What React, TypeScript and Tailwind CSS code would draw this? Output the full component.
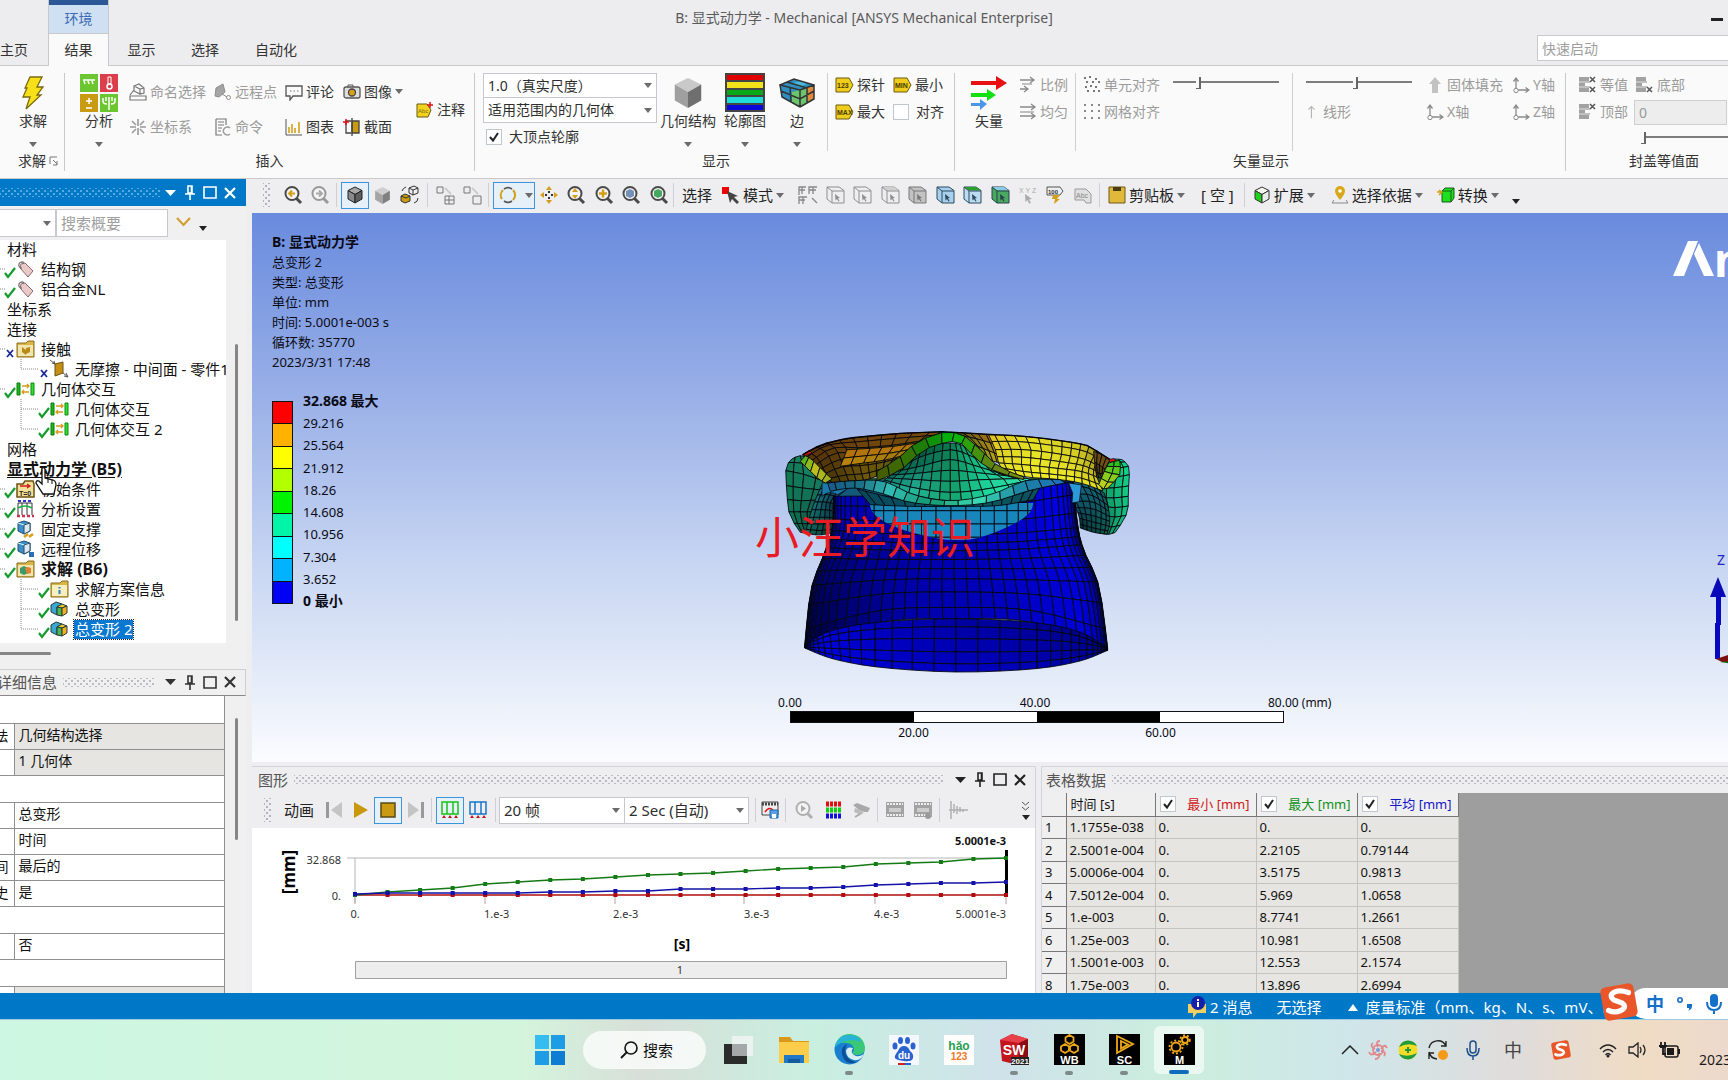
import React from "react";

type P = [number, number];
type RGB = [number, number, number];

/* ---------- shared small pieces ---------- */

function Caret({ className = "text-[#6b6b6b]" }: { className?: string }) {
  return (
    <svg width="8" height="5" viewBox="0 0 8 5" className={"shrink-0 " + className} aria-hidden="true">
      <path d="M0 0h8L4 5z" fill="currentColor" />
    </svg>
  );
}

function Ic({ w = 18, h = 18, vb = "0 0 18 18", children }: { w?: number; h?: number; vb?: string; children: React.ReactNode }) {
  return (
    <svg width={w} height={h} viewBox={vb} fill="none" className="shrink-0" aria-hidden="true">
      {children}
    </svg>
  );
}

function Cube({ top, left, right, line = "#444", w = 18 }: { top: string; left: string; right: string; line?: string; w?: number }) {
  return (
    <Ic w={w} h={w}>
      <path d="M9 1l7 3.500-7 4-7-4z" fill={top} stroke={line} />
      <path d="M2 4.500v8.500l7 4V8.500z" fill={left} stroke={line} />
      <path d="M16 4.500v8.500l-7 4V8.500z" fill={right} stroke={line} />
    </Ic>
  );
}

function Mag({ color = "#4a4a4a", fill = "#f4f4f4", children }: { color?: string; fill?: string; children?: React.ReactNode }) {
  return (
    <Ic w={20} h={20} vb="0 0 20 20">
      <path d="M13 13l5 5" stroke={color} strokeWidth="3" />
      <circle cx="9" cy="8.500" r="6.500" fill={fill} stroke={color} strokeWidth="2" />
      {children}
    </Ic>
  );
}

function Tag({ text }: { text: string }) {
  return (
    <Ic w={19} h={16} vb="0 0 19 16">
      <path d="M1 1h13l4 7-4 7H1z" fill="#f0cc1c" stroke="#6a5a10" />
      <text x="2" y="11" fontSize="7" fontWeight="700" fill="#4a3c00" fontFamily="Liberation Sans, sans-serif">{text}</text>
    </Ic>
  );
}

function SelBox({ fill = "none", line = "#8e8e8e", face = "none" }: { fill?: string; line?: string; face?: string }) {
  return (
    <Ic w={19} h={20} vb="0 0 19 20">
      <path d="M1 2h12l5 3.500V18H6l-5-4z" fill={fill} stroke={line} />
      {face !== "none" && <path d="M1 2h12l5 3.500H6z" fill={face} />}
      <path d="M1 2l5 4h12M6 6v12" stroke={line} />
      <path d="M9 9l5 4-2 .3 1.500 2.700-1 .6-1.500-2.600-1.500 1.400z" fill={line} />
    </Ic>
  );
}

function Axis() {
  return (
    <Ic>
      <path d="M4 14V3M4 14h12M1.500 5.500L4 2l2.500 3.500M13.500 11.500L17 14l-3.500 2.500" stroke="#8a8a8a" strokeWidth="1.300" />
      <circle cx="4" cy="14.500" r="2.200" fill="#f9f9f9" stroke="#8a8a8a" />
    </Ic>
  );
}

function Iso({ v = 0 }: { v?: number }) {
  return (
    <Ic w={19} h={18} vb="0 0 19 18">
      <path d="M1 1h10v4H1zM1 7h6v3H1zM1 12h10v4H1z" fill="#a2a2a2" />
      <path d="M1 6h11M1 11h11" stroke="#888" />
      {v !== 1 && <path d="M12 1l5 5m0-5l-5 5" stroke="#555" strokeWidth="1.500" />}
      {v !== 2 && <path d="M12 11l5 5m0-5l-5 5" stroke="#555" strokeWidth="1.500" />}
    </Ic>
  );
}

function Small({ icon, label, off, caret }: { icon: React.ReactNode; label: string; off?: boolean; caret?: boolean }) {
  return (
    <button type="button" className={"flex h-6 items-center gap-[3px] whitespace-nowrap text-sm leading-5 " + (off ? "text-[#9c9c9c]" : "text-[#333]")}>
      {icon}
      <span>{label}</span>
      {caret && <Caret />}
    </button>
  );
}

function Big({ icon, label, caret = true, className }: { icon: React.ReactNode; label: string; caret?: boolean; className: string }) {
  return (
    <button type="button" className={"flex h-20 shrink-0 flex-col items-center text-sm text-[#333] " + className}>
      <span className="flex h-[39px] items-center justify-center">{icon}</span>
      <span className="whitespace-nowrap leading-[18px]">{label}</span>
      {caret && <span className="mt-3"><Caret /></span>}
    </button>
  );
}

function Group({ label, className, children }: { label: React.ReactNode; className: string; children: React.ReactNode }) {
  return (
    <section className={"my-[7px] flex flex-col border-[#c9c9cc] " + className}>
      <div className="flex h-20">{children}</div>
      <div className="flex h-4 items-center justify-center text-sm leading-4 whitespace-nowrap text-[#333]">{label}</div>
    </section>
  );
}

function Drop({ value, label, className }: { value: string; label: string; className: string }) {
  return (
    <div className={"relative border border-[#c6c8ce] bg-white " + className}>
      <select aria-label={label} className="h-full w-full appearance-none bg-transparent pr-5 pl-1 text-[#2d2d2d] outline-none">
        <option>{value}</option>
      </select>
      <span className="pointer-events-none absolute inset-y-0 right-1 flex items-center"><Caret /></span>
    </div>
  );
}

function Tick({ id, checked, className }: { id: string; checked: boolean; className: string }) {
  return (
    <span className={"relative inline-block shrink-0 " + className}>
      <input id={id} type="checkbox" defaultChecked={checked} className="peer block h-full w-full appearance-none border border-[#c2c6cf] bg-white" />
      <svg viewBox="0 0 14 14" className="pointer-events-none absolute inset-0 hidden h-full w-full p-px peer-checked:block" aria-hidden="true">
        <path d="M3 7l3 3.500L11 3" fill="none" stroke="#222" strokeWidth="2" />
      </svg>
    </span>
  );
}

function Range({ label, value, className }: { label: string; value: number; className: string }) {
  return (
    <input
      type="range"
      aria-label={label}
      defaultValue={value}
      className={"h-4 appearance-none bg-transparent [&::-webkit-slider-runnable-track]:h-0.5 [&::-webkit-slider-runnable-track]:bg-[#7d7d7d] [&::-webkit-slider-thumb]:-mt-1 [&::-webkit-slider-thumb]:h-3 [&::-webkit-slider-thumb]:w-[5px] [&::-webkit-slider-thumb]:appearance-none [&::-webkit-slider-thumb]:border-r-2 [&::-webkit-slider-thumb]:border-b [&::-webkit-slider-thumb]:border-[#666] [&::-webkit-slider-thumb]:bg-[#f9f9f9] " + className}
    />
  );
}

function Dots({ light }: { light?: boolean }) {
  return (
    <div
      className={
        "h-[9px] min-w-0 flex-1 [background-position:0_0,3px_3px] [background-size:6px_6px] " +
        (light
          ? "[background-image:radial-gradient(#5aa9e0_18%,transparent_26%),radial-gradient(#5aa9e0_18%,transparent_26%)]"
          : "[background-image:radial-gradient(#bcbcc0_18%,transparent_26%),radial-gradient(#bcbcc0_18%,transparent_26%)]")
      }
    />
  );
}

function Grip() {
  return <div className="h-[24px] w-[7px] shrink-0 [background-image:radial-gradient(#b4b4b8_20%,transparent_28%),radial-gradient(#b4b4b8_20%,transparent_28%)] [background-position:0_0,3px_3px] [background-size:6px_6px]" />;
}

function PanelButtons() {
  const b = "flex h-5 items-center justify-center";
  return (
    <div className="flex shrink-0 items-center">
      <button type="button" aria-label="菜单" className={b + " w-5"}><Ic w={11} h={6} vb="0 0 11 6"><path d="M0 0h11L5.500 6z" fill="currentColor" /></Ic></button>
      <button type="button" aria-label="固定" className={b + " w-5"}><Ic w={10} h={15} vb="0 0 10 15"><path d="M3 1h4v7H3zM6.500 1v7M0 9h10M5 9v6" stroke="currentColor" strokeWidth="1.600" /></Ic></button>
      <button type="button" aria-label="最大化" className={b + " w-5"}><Ic w={14} h={13} vb="0 0 14 13"><path d="M1 1h12v11H1z" stroke="currentColor" strokeWidth="1.600" /></Ic></button>
      <button type="button" aria-label="关闭" className={b + " w-5"}><Ic w={12} h={12} vb="0 0 12 12"><path d="M1 1l10 10M11 1L1 11" stroke="currentColor" strokeWidth="2.200" /></Ic></button>
    </div>
  );
}

function VSep({ className = "h-6 mx-[3px]" }: { className?: string }) {
  return <div className={"w-px shrink-0 bg-[#cfcfd3] " + className} />;
}

/* ---------- title bar and tabs ---------- */

function TitleBar() {
  const tab = "h-[33px] text-sm text-[#333]";
  return (
    <header className="relative flex h-[66px] shrink-0 items-stretch border-b border-[#c9c9cc] bg-[#ededf0]">
      <nav className="z-10 flex h-[66px] items-end">
        <button type="button" className={tab + " w-[48px] pr-5 text-left"}>主页</button>
        <div className="flex h-[66px] w-[61px] flex-col border-x border-[#c9c9cc]">
          <div className="flex h-[33px] items-center justify-center border-t-[5px] border-[#2b5797] bg-[#cfe0f2] text-sm text-[#3c6cb4]">环境</div>
          <button type="button" className="h-[33px] border-t border-[#c9c9cc] bg-[#fafafa] text-sm text-[#333]">结果</button>
        </div>
        <button type="button" className={tab + " w-[65px]"}>显示</button>
        <button type="button" className={tab + " w-[62px]"}>选择</button>
        <button type="button" className={tab + " w-[80px]"}>自动化</button>
      </nav>
      <h1 className="absolute inset-x-0 top-2 text-center text-sm leading-5 font-normal text-[#5a5a5a]">B: 显式动力学 - Mechanical [ANSYS Mechanical Enterprise]</h1>
      <button type="button" aria-label="最小化" className="absolute top-[9px] right-[5px] flex h-5 w-3 items-center"><span className="h-[3px] w-full bg-[#222]" /></button>
      <input aria-label="快速启动" placeholder="快速启动" className="ml-auto mt-[35px] h-[26px] w-[191px] border border-r-0 border-[#c9c9cc] bg-white px-1 text-sm outline-none placeholder:text-[#a0a0a0]" />
    </header>
  );
}

/* ---------- ribbon ---------- */

function Ribbon() {
  const bar = (y: number, l: number) => <path d={`M1 ${y}h${l}M${l - 3} ${y - 3}l4 3-4 3`} stroke="#8a8a8a" strokeWidth="1.300" />;
  return (
    <div className="flex h-[113px] shrink-0 overflow-hidden border-b border-[#c9c9cc] bg-[#fafafa]">
      <Group className="w-[65px] shrink-0 border-r" label={<span className="flex items-center gap-[3px] pl-[13px]">求解<Ic w={10} h={10} vb="0 0 10 10"><path d="M1 8V1h7M4 4l4 4M8 5v4H4" stroke="#777" /></Ic></span>}>
        <Big className="w-full pl-0.5" label="求解" icon={<Ic w={24} h={34} vb="0 0 22 34"><path d="M8 1h12l-5 10h6l-6 8h4L4 33l4-12H1l4-9H3z" fill="#f7e018" stroke="#7a6a10" strokeWidth="1.300" /></Ic>} />
      </Group>

      <Group className="w-[410px] shrink-0 border-r" label="插入">
        <Big className="ml-[13px] w-[42px]" label="分析" icon={
          <Ic w={38} h={38} vb="0 0 38 38">
            <path d="M0 0h18v18H0zM20 20h18v18H20z" fill="#6cc62f" /><path d="M20 0h18v18H20z" fill="#dc3f4c" /><path d="M0 20h18v18H0z" fill="#c99b12" />
            <path d="M3 6h12M4 7l1 3M8 7l1 3M12 7l1 3M6 27h6M9 24v6M6 34h6M23 24v3q0 3 4 3M35 24v3q0 3-4 3M29 23v13M26 23v4M32 23v4" stroke="#fff" strokeWidth="1.500" /><path d="M28 3h3v7h-3z" stroke="#fff" /><circle cx="29.500" cy="12.500" r="2.500" stroke="#fff" strokeWidth="1.500" />
          </Ic>} />
        <div className="ml-[9px] grid h-[72px] grid-cols-[85px_71px_58px_72px] grid-rows-2 items-center pt-px">
          <Small off label="命名选择" icon={<Ic><path d="M1 13h16v4H1zM5 3l5-2 5 4v5l-4 1-6-3zM5 3l6 3 4-1M11 6v5M1 12l4-5" stroke="#777" strokeWidth="1.200" /></Ic>} />
          <Small off label="远程点" icon={<Ic><path d="M2 5l7-4 2 8-6 5-4-1z" fill="#a5a5a5" stroke="#8d8d8d" /><path d="M8 11l5 3" stroke="#8d8d8d" /><circle cx="14.500" cy="14.500" r="2" stroke="#8d8d8d" /></Ic>} />
          <Small label="评论" icon={<Ic><path d="M1 3h16v10H8l-3 4v-4H1z" stroke="#555" strokeWidth="1.300" /><path d="M5 8h1.500M8.500 8H10M12 8h1.500" stroke="#777" strokeWidth="1.200" /></Ic>} />
          <Small label="图像" caret icon={<Ic><rect x="1" y="4" width="16" height="11" rx="2" fill="#ddd" stroke="#555" strokeWidth="1.300" /><path d="M5 4V2h5v2" stroke="#555" /><circle cx="9" cy="9.500" r="3.500" fill="#d8a018" stroke="#444" strokeWidth="1.300" /></Ic>} />
          <Small off label="坐标系" icon={<Ic><path d="M9 1v7M9 10v7M1 9h6M11 9h6M3 3l4 4M15 3l-4 4M3 15l4-4M15 15l-4-4" stroke="#9a9a9a" strokeWidth="1.600" /></Ic>} />
          <Small off label="命令" icon={<Ic><path d="M2 1h10v6M2 1v16h6M4 4h6M4 7h6M4 10h4M4 13h3" stroke="#777" strokeWidth="1.200" /><path d="M16 10a4 4 0 1 0 0 6" stroke="#9d9d9d" strokeWidth="1.600" /></Ic>} />
          <Small label="图表" icon={<Ic><path d="M1 1v16h16" stroke="#555" /><path d="M4 15V9M7 15V6M10 15v-5M14 15V4" stroke="#d2a018" strokeWidth="1.600" /></Ic>} />
          <Small label="截面" icon={<Ic><path d="M9 3h7v12H9z" fill="#c99b12" stroke="#444" strokeWidth="1.300" /><path d="M8 3H3v12h5M9 0v18" stroke="#444" strokeWidth="1.300" /><path d="M3 1v6M0 4h6" stroke="#e01010" strokeWidth="1.500" /></Ic>} />
        </div>
        <div className="flex items-center pb-1.5 pl-px">
          <Small label="注释" icon={<Ic><path d="M1 3h10l4 6-3 7H1z" fill="#f2d21e" stroke="#665c10" /><text x="2" y="12" fontSize="6" fill="#7a6a10" fontFamily="Liberation Sans, sans-serif">Abc</text><path d="M14 1v6M11 4h6" stroke="#e01010" strokeWidth="1.500" /></Ic>} />
        </div>
      </Group>

      <Group className="w-[480px] shrink-0 border-r" label={<span className="w-full pl-[227px]">显示</span>}>
        <div className="ml-2 w-[174px] text-sm">
          <Drop className="h-[25px] w-full" label="变形比例" value="1.0（真实尺度）" />
          <Drop className="h-[25px] w-full border-t-0" label="范围" value="适用范围内的几何体" />
          <label htmlFor="vertex" className="mt-1 ml-[3px] flex items-center gap-[7px] leading-5 text-[#333]"><Tick id="vertex" checked className="size-4" />大顶点轮廓</label>
        </div>
        <Big className="ml-0.5 w-[58px]" label="几何结构" icon={<Cube w={34} top="#c9c9c9" left="#9f9f9f" right="#6f6f6f" line="none" />} />
        <Big className="w-14" label="轮廓图" icon={<Ic w={40} h={39} vb="0 0 40 39"><path d="M0 0h40v39H0z" fill="#444" /><path d="M2 2h36v5H2z" fill="#e00000" /><path d="M2 9h36v6H2z" fill="#f2e21a" /><path d="M2 17h36v5H2z" fill="#08a818" /><path d="M2 24h36v6H2z" fill="#1fdcd8" /><path d="M2 32h36v5H2z" fill="#0808d8" /></Ic>} />
        <Big className="w-[48px]" label="边" icon={<Ic w={36} h={30} vb="0 0 36 30"><path d="M1 7l14-6 20 6v14l-14 8L3 19z" fill="#2f8fc0" /><path d="M13 14l8-2 14-5v14l-14 8-8-5z" fill="#6cc46c" /><path d="M28 10l7-3v13l-7 4z" fill="#e08a40" /><path d="M14 5l8-2 6 3-8 3z" fill="#4ab8d8" /><path d="M1 7l14-6 20 6-14 5zM1 7l2 12 18 10M21 12v17M35 7v14l-14 8M8 4l20 6v14M11 9l1 15M2 13l19 8 14-8" stroke="#333" strokeWidth="1.500" /></Ic>} />
        <VSep className="ml-[6px] h-[78px]" />
        <div className="ml-[7px] grid h-[51px] grid-cols-[58px_60px] gap-y-[3px]">
          <Small label="探针" icon={<Tag text="123" />} />
          <Small label="最小" icon={<Tag text="MIN" />} />
          <Small label="最大" icon={<Tag text="MAX" />} />
          <label htmlFor="snap" className="flex items-center gap-[7px] text-sm text-[#333]"><Tick id="snap" checked={false} className="size-4" />对齐</label>
        </div>
      </Group>

      <Group className="w-[611px] shrink-0 border-r" label={<span className="w-full pl-[278px]">矢量显示</span>}>
        <Big className="ml-[11px] w-[46px]" caret={false} label="矢量" icon={<Ic w={36} h={34} vb="0 0 36 34"><path d="M0 5h25V0l11 7-11 7V9H0z" fill="#e81010" /><path d="M0 17h16v-4l9 6-9 6v-4H0z" fill="#12e012" /><path d="M0 27h9v-4l7 5-7 6v-4H0z" fill="#4a96e8" /></Ic>} />
        <div className="ml-[7px] flex flex-col gap-[3px]">
          <Small off label="比例" icon={<Ic>{bar(4, 14)}{bar(13, 8)}<path d="M3 8h10" stroke="#8a8a8a" /></Ic>} />
          <Small off label="均匀" icon={<Ic>{bar(4, 15)}{bar(13, 15)}<path d="M1 9h14" stroke="#aaa" strokeWidth="1.500" /></Ic>} />
        </div>
        <VSep className="ml-[7px] h-[78px]" />
        <div className="ml-[7px] flex flex-col gap-[3px]">
          <Small off label="单元对齐" icon={<Ic><path d="M1 2h2M6 1h2M12 3h2M3 6h2M9 6h2M15 6h2M2 11h2M7 10h2M12 11h2M4 15h2M10 15h2M15 15h2" stroke="#777" strokeWidth="2" /></Ic>} />
          <Small off label="网格对齐" icon={<Ic><path d="M1 2h2M8 2h2M15 2h2M1 8h2M8 8h2M15 8h2M1 15h2M8 15h2M15 15h2" stroke="#888" strokeWidth="2" /></Ic>} />
        </div>
        <Range label="数量" value={23} className="mt-px ml-[13px] w-[106px]" />
        <VSep className="ml-[13px] h-[78px]" />
        <div className="ml-[13px] flex w-[106px] flex-col gap-[10px] pt-px">
          <Range label="长度" value={47} className="w-full" />
          <Small off label="线形" icon={<Ic w={14}><path d="M7 17V2M3 6l4-4 4 4" stroke="#b5b5b5" strokeWidth="1.500" /></Ic>} />
        </div>
        <div className="ml-[14px] grid h-[51px] grid-cols-[86px_50px] gap-y-[3px]">
          <Small off label="固体填充" icon={<Ic><path d="M6 17V8H3l6-7 6 7h-3v9z" fill="#c2c2c2" /></Ic>} />
          <Small off label="Y轴" icon={<Axis />} />
          <Small off label="X轴" icon={<Axis />} />
          <Small off label="Z轴" icon={<Axis />} />
        </div>
      </Group>

      <Group className="min-w-0 flex-1" label={<span className="w-full pl-[63px]">封盖等值面</span>}>
        <div className="grid h-[51px] w-full grid-cols-[57px_1fr] gap-y-[3px] pl-3">
          <Small off label="等值" icon={<Iso />} />
          <Small off label="底部" icon={<Iso v={1} />} />
          <Small off label="顶部" icon={<Iso v={2} />} />
          <div className="flex min-w-0 flex-col">
            <input aria-label="等值面值" defaultValue="0" className="-ml-px h-[25px] w-full shrink-0 border border-[#cfcfcf] bg-[#ededed] px-1 text-sm text-[#999]" />
            <Range label="等值面" value={0} className="mt-1 ml-1.5 w-full" />
          </div>
        </div>
      </Group>
    </div>
  );
}

/* ---------- left side panels ---------- */

const checkPath = (x: number) => `M${x} 14l3 4 7-9`;

type IconKind = "tag" | "contact" | "plane" | "inter" | "init" | "settings" | "fixed" | "remote" | "solution" | "info" | "result";

function TreeGlyph({ kind }: { kind: IconKind }) {
  const folder = <path d="M1 3h9l2-2h6v16H1z" fill="#d9b54a" stroke="#8a6d1d" />;
  switch (kind) {
    case "tag":
      return <g><path d="M5 4l4-1 8 8-5 6-8-9z" fill="#ecc9c9" stroke="#8a6a6a" /><path d="M6 8a3 3 0 1 1 2-5" stroke="#777" strokeWidth="1.300" /></g>;
    case "contact":
      return <g>{folder}<path d="M2 5h15v11H2z" fill="#f2e6b0" /><path d="M6 7l4 3v5l-4-3zM10 8l4-1v5l-4 2z" fill="#b98a18" /></g>;
    case "plane":
      return <g><path d="M5 4l8-2v11l-8 3z" fill="#c58f16" stroke="#6d5210" /><path d="M0 0l5 4M13 13l5 4M2 3l3 1-1-3M16 13l2 4-4-1" stroke="#555" /></g>;
    case "inter":
      return <g><path d="M1 3h3v12H1z" fill="#18b818" stroke="#0a7a0a" /><path d="M15 3h3v12h-3z" fill="#30e030" stroke="#0a8a0a" /><path d="M6 6h7M11 4l2 2-2 2M13 12H6M8 10l-2 2 2 2" stroke="#d89a20" strokeWidth="1.300" /></g>;
    case "init":
      return <g><path d="M1 4h6l2-3h8l1 3v13H1z" fill="#f2df98" stroke="#6d5210" strokeWidth="1.500" /><path d="M4 6h9M11 4l3 2-3 2" stroke="#d02020" strokeWidth="1.300" /><text x="3" y="16" fontSize="7" fontWeight="700" fill="#222" fontFamily="Liberation Sans, sans-serif">T=0</text></g>;
    case "settings":
      return <g><path d="M2 1h14" stroke="#3030d0" strokeWidth="2" strokeDasharray="3 2" /><path d="M2 3v12M6 3v12M11 3v12M16 3v12M2 3h14" stroke="#333" /><path d="M2 8q7-4 14 0" stroke="#20b040" strokeWidth="1.600" /><path d="M1 16h17" stroke="#d03050" strokeWidth="2.500" strokeDasharray="3 2" /></g>;
    case "fixed":
    case "remote":
      return <g><path d="M2 3l6-2 6 2v8l-6 3-6-3z" fill="#3d8fc8" stroke="#234f70" /><path d="M2 3l6 2 6-2" stroke="#dff" /><path d="M8 5l6-2v8l-6 3z" fill="#dfe9ee" stroke="#234f70" />{kind === "fixed" ? <path d="M8 17l4-3M13 17l4-3" stroke="#d8a018" strokeWidth="2.500" /> : <path d="M13 12h5v5h-5z" fill="#2a70b0" />}</g>;
    case "solution":
      return <g>{folder}<path d="M2 5h15v11H2z" fill="#f2e6b0" /><path d="M4 8l4-2 4 2v5l-4 2-4-2z" fill="#3a9a68" /><path d="M9 8l3-1 3 1v5l-4 1z" fill="#e08030" /></g>;
    case "info":
      return <g>{folder}<path d="M2 5h15v11H2z" fill="#f7efc0" /><path d="M9.500 7v1.500M9.500 10v4" stroke="#3080c0" strokeWidth="2" /></g>;
    default:
      return (
        <g strokeLinejoin="round">
          <path d="M1 5l5-3 6 2-5 3v8l-6-3z" fill="#38a8d0" stroke="#2a3a3a" />
          <path d="M7 7l5-3 5 2-5 2z" fill="#e8d030" stroke="#2a3a3a" />
          <path d="M7 7l5 1v8l-5-1z" fill="#48b850" stroke="#2a3a3a" />
          <path d="M12 8l5-2v7l-5 3z" fill="#f0b020" stroke="#2a3a3a" />
        </g>
      );
  }
}

type Row = { t: string; l: 0 | 1 | 2; k?: IconKind; x?: boolean; last?: boolean; bold?: boolean; under?: boolean; sel?: boolean };
const ROWS: Row[] = [
  { t: "材料", l: 0 },
  { t: "结构钢", l: 1, k: "tag" },
  { t: "铝合金NL", l: 1, k: "tag" },
  { t: "坐标系", l: 0 },
  { t: "连接", l: 0 },
  { t: "接触", l: 1, k: "contact", x: true },
  { t: "无摩擦 - 中间面 - 零件1", l: 2, k: "plane", x: true, last: true },
  { t: "几何体交互", l: 1, k: "inter" },
  { t: "几何体交互", l: 2, k: "inter" },
  { t: "几何体交互 2", l: 2, k: "inter", last: true },
  { t: "网格", l: 0 },
  { t: "显式动力学 (B5)", l: 0, bold: true, under: true },
  { t: "初始条件", l: 1, k: "init" },
  { t: "分析设置", l: 1, k: "settings" },
  { t: "固定支撑", l: 1, k: "fixed" },
  { t: "远程位移", l: 1, k: "remote" },
  { t: "求解 (B6)", l: 1, k: "solution", bold: true },
  { t: "求解方案信息", l: 2, k: "info" },
  { t: "总变形", l: 2, k: "result" },
  { t: "总变形 2", l: 2, k: "result", last: true, sel: true },
];

function TreeRow({ r }: { r: Row }) {
  const w = r.l === 2 ? 74 : 40;
  const dx = r.l === 2 ? 34 : 0;
  return (
    <li className="flex h-5 items-center whitespace-nowrap">
      {r.l === 0 ? (
        <span className="w-[6px] shrink-0" />
      ) : (
        <svg width={w} height="20" viewBox={`0 0 ${w} 20`} fill="none" className="shrink-0" aria-hidden="true">
          {r.l === 2 && <path d={r.last ? "M21 0v10h18" : "M21 0v20M21 10h18"} stroke="#888" strokeDasharray="1 1" />}
          {r.l === 1 && <path d="M0 10h5" stroke="#888" strokeDasharray="1 1" />}
          <g transform={`translate(${16 + dx} 1)`}><TreeGlyph kind={r.k as IconKind} /></g>
          {r.x ? <path d={`M${7 + dx} 11l6 7m0-7l-6 7`} stroke="#1a2a9a" strokeWidth="1.800" /> : <path d={checkPath(5 + dx)} stroke="#159a2c" strokeWidth="2.200" />}
        </svg>
      )}
      <span className={"px-px leading-[19px] " + (r.bold ? "text-base font-bold " : "text-[15px] ") + (r.under ? "underline underline-offset-2 " : "") + (r.sel ? "bg-[#0a78d0] text-white outline-1 outline-dotted outline-[#223]" : "text-[#111]")}>{r.t}</span>
    </li>
  );
}

const DETAILS: { a?: string; b?: string; group?: boolean; grey?: boolean }[] = [
  { group: true },
  { a: "法", b: "几何结构选择", grey: true },
  { a: "", b: "1 几何体", grey: true },
  { group: true },
  { a: "", b: "总变形" },
  { a: "", b: "时间" },
  { a: "间", b: "最后的" },
  { a: "史", b: "是" },
  { group: true },
  { a: "", b: "否" },
  { group: true },
  { a: "", b: "0. mm", grey: true },
];

function LeftColumn() {
  return (
    <aside className="flex w-[246px] shrink-0 flex-col overflow-hidden bg-[#f0f0f0]">
      <div className="flex h-[27px] shrink-0 items-center bg-[#0078c8] pr-[6px] text-white">
        <Dots light />
        <PanelButtons />
      </div>
      <div className="flex h-[34px] shrink-0 items-start pt-[3px]">
        <Drop className="h-7 w-14 border-l-0" label="概要筛选" value="" />
        <input aria-label="搜索概要" placeholder="搜索概要" className="h-7 w-[112px] border border-[#c6c8ce] bg-white px-1 text-[15px] outline-none placeholder:text-[#a0a0a0]" />
        <button type="button" aria-label="展开" className="mt-[7px] ml-2"><Ic w={15} h={12} vb="0 0 15 12"><path d="M1 2l6.500 7L14 2" stroke="#d0a030" strokeWidth="2.200" /></Ic></button>
        <button type="button" aria-label="更多" className="mt-[17px] ml-2 text-[#222]"><Caret className="text-[#222]" /></button>
      </div>
      <div className="flex h-[403px] shrink-0">
        <div className="relative w-[226px] shrink-0 overflow-hidden bg-white">
          <ul className="-mt-px">{ROWS.map((r, i) => <TreeRow key={i} r={r} />)}</ul>
          <svg width="22" height="28" viewBox="0 0 22 28" className="absolute top-[227px] left-[35px]" aria-hidden="true">
            <path d="M7 1q2-1 3 1v9l8 2q3 1 3 5l-2 9H8L1 16q0-3 3-2l3 3z" fill="#fff" stroke="#111" strokeWidth="1.300" />
            <path d="M13 12v4M17 13v4" stroke="#111" />
          </svg>
        </div>
        <div className="mt-[104px] ml-[9px] h-[277px] w-[3px] rounded bg-[#868686]" />
      </div>
      <div className="h-[26px] shrink-0 pt-[9px]"><div className="h-[3px] w-[51px] rounded-r bg-[#868686]" /></div>
      <section className="flex min-h-0 flex-1 flex-col">
        <div className="flex h-[27px] shrink-0 items-center gap-[6px] border-y border-r border-[#cfcfd3] border-b-[#888] pr-[5px] pb-px text-[#333]">
          <h2 className="-ml-[3px] text-[15px] leading-5 font-normal text-[#555]">详细信息</h2>
          <Dots />
          <PanelButtons />
        </div>
        <div className="flex min-h-0 flex-1">
          <div className="w-[225px] shrink-0 overflow-hidden">
            <table className="w-full table-fixed border-collapse border-r border-[#8f8f8f] bg-white text-sm leading-5 text-[#111]">
              <colgroup><col className="w-[14px]" /><col /></colgroup>
              <tbody>
                {DETAILS.map((d, i) =>
                  d.group ? (
                    <tr key={i} className="h-[27px] border-b border-[#8f8f8f]"><td colSpan={2} className="p-0" /></tr>
                  ) : (
                    <tr key={i} className="h-[26px] border-b border-[#8f8f8f]">
                      <td className="overflow-hidden border-r border-[#8f8f8f] p-0"><span className="float-right mr-[5px] h-5 whitespace-nowrap">{d.a}</span></td>
                      <td className={"p-0 pb-0.5 pl-1 whitespace-nowrap " + (d.grey ? "bg-[#e6e5e1]" : "bg-white")}>{d.b}</td>
                    </tr>
                  ),
                )}
              </tbody>
            </table>
          </div>
          <div className="mt-[22px] ml-[10px] h-[122px] w-[3px] rounded bg-[#868686]" />
        </div>
      </section>
    </aside>
  );
}

/* ---------- viewport toolbar ---------- */

function TB({ children, boxed, className = "w-[27px]", label }: { children: React.ReactNode; boxed?: boolean; className?: string; label: string }) {
  return (
    <button type="button" aria-label={label} className={"flex h-[27px] shrink-0 items-center justify-center " + (boxed ? "border border-[#3c94dc] bg-[#e6f0f8] " : "") + className}>{children}</button>
  );
}

function TT({ icon, label, caret = true, className }: { icon?: React.ReactNode; label: string; caret?: boolean; className?: string }) {
  return (
    <button type="button" className={"flex shrink-0 items-center gap-[3px] text-[15px] whitespace-nowrap text-[#222] " + (className || "")}>
      {icon}<span>{label}</span>{caret && <Caret />}
    </button>
  );
}

function ViewToolbar() {
  const gold = "#d2a018";
  return (
    <div className="flex h-[34px] shrink-0 items-center bg-[#eeeef0] pb-0.5 pl-[11px]">
      <Grip />
      <div className="ml-[9px] flex items-center">
        <TB label="上一视图"><Mag><path d="M12 8.500H6M9 5.500l-3 3 3 3" stroke={gold} strokeWidth="2" /></Mag></TB>
        <TB label="下一视图"><Mag color="#999"><path d="M6 8.500h6M9 5.500l3 3-3 3" stroke="#aaa" strokeWidth="2" /></Mag></TB>
        <VSep />
        <TB boxed label="着色外部和边" className="ml-px w-7"><Cube top="#a8a8a8" left="#8a8a8a" right="#5e5e5e" line="#222" /></TB>
        <TB label="着色外部"><Cube w={19} top="#cfcfcf" left="#a5a5a5" right="#808080" line="none" /></TB>
        <TB label="线框" className="w-7"><Ic w={20} h={20} vb="0 0 20 20"><path d="M9 3l5-2 4 2v5l-5 2-4-2zM9 3l4 2 5-2M13 5v5" stroke="#333" /><path d="M1 11l4-2 5 2v5l-5 2-4-2z" fill="#c99b12" stroke="#333" /><path d="M1 11l5 2 4-2M2 6q1-3 4-4M18 13q0 4-4 5" stroke="#333" /></Ic></TB>
        <VSep />
        <TB label="展开" className="w-7"><Ic w={19} h={20} vb="0 0 19 20"><path d="M1 2h6v6H1zM9 11h9v8H9zM9 15h9M13 11v8" stroke="#777" /><path d="M9 3l6 6" stroke="#ccc" strokeWidth="2" /></Ic></TB>
        <TB label="收起" className="w-[27px]"><Ic w={19} h={20} vb="0 0 19 20"><path d="M1 2h6v6H1zM10 11h8v8h-8z" stroke="#777" /><path d="M9 3l6 6" stroke="#ccc" strokeWidth="2" /></Ic></TB>
        <VSep className="mr-1 ml-[2px] h-6" />
        <TB boxed label="旋转" className="w-[42px] gap-2 pl-1"><Ic><path d="M3 13a7 7 0 0 1 1-9M14 4a7 7 0 0 1 0 10" stroke={gold} strokeWidth="2" /><path d="M5 3a7 7 0 0 1 8 0M13 15a7 7 0 0 1-8 0" stroke="#555" strokeWidth="1.600" /></Ic><Caret /></TB>
        <TB label="平移"><Ic><path d="M9 0l3 4H6zM9 18l3-4H6zM0 9l4-3v6zM18 9l-4-3v6z" fill={gold} /><path d="M9 5v2M9 11v2M5 9h2M11 9h2" stroke="#333" strokeWidth="2" /></Ic></TB>
        <TB label="缩放" className="w-7"><Mag><path d="M9 3l3 4H6zM9 14l3-4H6z" fill={gold} /></Mag></TB>
        <TB label="框选缩放"><Mag><path d="M9 4.500v8M5 8.500h8" stroke={gold} strokeWidth="2.500" /></Mag></TB>
        <TB label="缩放匹配" className="w-7"><Mag><path d="M5 6l4-2 4 2v5l-4 2-4-2z" fill="#7590b8" /></Mag></TB>
        <TB label="缩放选择"><Mag><path d="M5 6l4-2 4 2v5l-4 2-4-2z" fill="#45a860" /></Mag></TB>
        <VSep className="mx-px h-6" />
      </div>
      <span className="ml-[7px] text-[15px] text-[#222]">选择</span>
      <TT className="ml-[10px]" label="模式" icon={<Ic><path d="M0 1h7v7H0z" fill="#f00000" /><path d="M5 5l11 5-4 1 5 5-2 2-5-5-2 4z" fill="#444" /></Ic>} />
      <div className="ml-[10px] flex w-[302px] shrink-0 items-center justify-between">
        <TB label="过滤"><Ic w={20} h={20} vb="0 0 20 20"><path d="M1 10V2h7M1 5h6M4 2v7M11 9V2h8M11 5h7M15 2v7M1 19v-7h8M1 15h6M5 12v7M14 13l5 5" stroke="#888" strokeWidth="1.300" /></Ic></TB>
        <TB label="顶点"><SelBox /></TB>
        <TB label="边"><SelBox /></TB>
        <TB label="面"><SelBox face="#cfcfcf" /></TB>
        <TB label="体"><SelBox fill="#c2c2c2" line="#777" /></TB>
        <TB label="节点"><SelBox line="#2c4a60" fill="#a8d0ec" /></TB>
        <TB label="单元面"><SelBox line="#2c4a60" fill="#bcdcf0" face="#2aa02a" /></TB>
        <TB label="单元"><SelBox line="#24424a" fill="#4aa860" face="#8cc8e8" /></TB>
        <TB label="坐标"><Ic><text x="0" y="7" fontSize="7" fill="#aaa" fontFamily="Liberation Sans, sans-serif">X Y Z</text><path d="M6 8l7 5-3 .5 2 3.500-2 .5-1.500-3.500-2 2z" fill="#aaa" /></Ic></TB>
        <TB label="标记"><Ic><path d="M1 1h13l3 4-3 4H1z" fill="#eee" stroke="#555" /><text x="2" y="8" fontSize="6" fontWeight="700" fill="#333" fontFamily="Liberation Sans, sans-serif">100</text><path d="M7 9h7l-3 4h3l-6 5 1-5H6z" fill={gold} /></Ic></TB>
        <TB label="注释标签"><Ic><path d="M1 3h11l5 5v9h-5l-2-3H1z" fill="#e0e0e0" stroke="#999" /><text x="2" y="12" fontSize="7" fill="#888" fontFamily="Liberation Sans, sans-serif">Abc</text></Ic></TB>
      </div>
      <VSep className="mx-[3px] h-6" />
      <TT className="ml-[5px]" label="剪贴板" icon={<Ic><path d="M1 1h16v16H1z" fill="#e0b83a" stroke="#6d5a18" /><path d="M5 1h8v4H5z" fill="#4a3d10" /></Ic>} />
      <span className="ml-[16px] shrink-0 text-[15px] whitespace-nowrap text-[#222]">[ 空 ]</span>
      <VSep className="mr-2 ml-[10px] h-6" />
      <TT label="扩展" icon={<Cube top="#f4f4f0" left="#20d020" right="#e8efe8" line="#333" />} />
      <TT className="ml-[16px]" label="选择依据" icon={<Ic><path d="M9 14Q4 8 4 5a5 5 0 0 1 10 0q0 3-5 9z" fill="#d8a818" /><circle cx="9" cy="5" r="1.800" fill="#fff" /><path d="M1 17h16M3 14l-2 3M15 14l2 3" stroke="#888" /></Ic>} />
      <TT className="ml-[14px]" label="转换" icon={<Ic><path d="M5 5l3-3h9v10l-3 4H5z" fill="#1fe01f" stroke="#1a5a1a" /><path d="M5 5h9v11M14 5l3-3" stroke="#1a5a1a" /><path d="M0 6h4M2 4l3 2-3 3" stroke={gold} strokeWidth="1.500" /></Ic>} />
      <span className="mt-3 ml-[13px]"><Caret className="text-[#222]" /></span>
    </div>
  );
}

/* ---------- deformed mesh ---------- */

function catmull(p: P[], t: number): P {
  const n = p.length - 1;
  const f = Math.min(Math.max(t, 0), 1) * n;
  const i = Math.min(Math.floor(f), n - 1);
  const s = f - i;
  const g = (k: number) => p[Math.min(Math.max(k, 0), n)];
  const [a, b, c, d] = [g(i - 1), g(i), g(i + 1), g(i + 2)];
  const q = (k: 0 | 1) =>
    0.5 * (2 * b[k] + (c[k] - a[k]) * s + (2 * a[k] - 5 * b[k] + 4 * c[k] - d[k]) * s * s + (3 * b[k] - a[k] - 3 * c[k] + d[k]) * s * s * s);
  return [q(0), q(1)];
}

function shade(c: RGB[], t: number): RGB {
  const n = c.length - 1;
  if (n === 0) return c[0];
  const f = Math.min(Math.max(t, 0), 1) * n;
  const i = Math.min(Math.floor(f), n - 1);
  const s = f - i;
  return [0, 1, 2].map((k) => Math.round(c[i][k] + (c[i + 1][k] - c[i][k]) * s)) as RGB;
}

function Patch({ rows, nu, nv, top, bot, round }: { rows: P[][]; nu: number; nv: number; top: RGB[]; bot?: RGB[]; round?: boolean }) {
  const at = (u: number, v: number): P => {
    const uu = round ? (1 - Math.cos(Math.PI * u)) / 2 : u;
    return catmull(rows.map((r) => catmull(r, uu)), v);
  };
  const cells: React.ReactNode[] = [];
  for (let j = 0; j < nv; j++)
    for (let i = 0; i < nu; i++) {
      const q = [at(i / nu, j / nv), at((i + 1) / nu, j / nv), at((i + 1) / nu, (j + 1) / nv), at(i / nu, (j + 1) / nv)];
      const u = (i + 0.5) / nu;
      const c = shade([shade(top, u), shade(bot || top, u)], (j + 0.5) / nv);
      cells.push(<path key={j * nu + i} d={"M" + q.map((p) => p.map((n) => n.toFixed(1)).join(" ")).join("L") + "Z"} fill={`rgb(${c.join(",")})`} />);
    }
  return <g stroke="#04060c" strokeWidth="2.600" strokeLinejoin="round">{cells}</g>;
}

function Model() {
  const rim: P[] = [[163, 738], [240, 694], [390, 667], [617, 657], [845, 668], [985, 696], [1072, 745]];
  return (
    <svg viewBox="95 85 1050 740" className="block w-full" role="img" aria-label="总变形云图">
      {/* ears behind the body */}
      <path d="M150 180L215 235H1040L1070 185L1110 200L1060 300L1000 310H230L190 290Z" fill="#2c5a30" />
      <path d="M215 240H1050V310H225Z" fill="#14587a" />
      <Patch nu={4} nv={7} top={[[20, 120, 85], [28, 150, 110]]} bot={[[10, 120, 80], [14, 70, 60]]}
        rows={[[[125, 178], [150, 168], [190, 180]], [[107, 205], [160, 215], [225, 240]], [[110, 280], [155, 285], [212, 285]], [[118, 345], [150, 345], [185, 345]], [[150, 398], [165, 400], [190, 404]]]} />
      <Patch nu={5} nv={8} top={[[28, 120, 150], [10, 60, 90]]} bot={[[14, 110, 80], [4, 50, 50]]}
        rows={[[[215, 255], [255, 245], [300, 260]], [[195, 300], [225, 300], [250, 305]], [[175, 360], [215, 360], [248, 360]], [[165, 400], [205, 406], [245, 400]]]} />
      <Patch nu={4} nv={9} top={[[20, 200, 120], [16, 220, 140]]} bot={[[12, 90, 70], [20, 190, 130]]}
        rows={[[[1060, 185], [1090, 178], [1115, 180]], [[1060, 220], [1100, 212], [1136, 205]], [[1050, 280], [1090, 280], [1134, 275]], [[1060, 340], [1095, 345], [1130, 340]], [[1050, 400], [1075, 404], [1095, 398]]]} />
      <Patch nu={7} nv={8} top={[[24, 110, 150], [14, 90, 100]]} bot={[[4, 40, 45], [14, 100, 80]]}
        rows={[[[930, 245], [1000, 248], [1062, 280]], [[960, 300], [1025, 300], [1075, 330]], [[985, 345], [1030, 355], [1078, 370]], [[990, 385], [1030, 398], [1070, 404]]]} />

      {/* body */}
      <Patch round nu={36} nv={11} top={[[0, 0, 215], [0, 0, 190], [0, 0, 170], [0, 0, 190], [0, 0, 230], [0, 0, 160]]} bot={[[0, 0, 40], [0, 0, 80], [0, 0, 170], [0, 0, 190], [0, 0, 215], [0, 0, 90]]}
        rows={[
          [[250, 290], [430, 290], [615, 300], [800, 275], [968, 245]],
          [[246, 385], [430, 395], [612, 398], [800, 392], [982, 375]],
          [[222, 460], [418, 465], [612, 466], [808, 462], [1000, 450]],
          [[182, 570], [400, 550], [612, 546], [830, 550], [1046, 560]],
          [[163, 738], [390, 668], [617, 657], [845, 668], [1072, 745]],
        ]} />
      <Patch round nu={34} nv={5} top={[[0, 0, 150], [0, 0, 215], [0, 0, 160], [0, 0, 130], [0, 0, 90]]} bot={[[0, 0, 215], [0, 0, 225], [0, 0, 195], [0, 0, 165], [0, 0, 150]]}
        rows={[rim, [[163, 745], [250, 778], [390, 803], [617, 817], [845, 808], [985, 785], [1072, 752]]]} />

      {/* low-displacement band on the front wall */}
      <clipPath id="front-band"><path d="M358 310H848Q850 340 800 368Q740 400 680 416Q620 428 550 414Q440 392 395 362Q360 342 358 310Z" /></clipPath>
      <g clipPath="url(#front-band)">
        <Patch nu={14} nv={4} top={[[22, 130, 175]]} bot={[[28, 140, 205]]} rows={[[[350, 306], [854, 306]], [[350, 440], [854, 440]]]} />
      </g>
      <Patch nu={18} nv={1} top={[[8, 70, 90], [10, 90, 100], [12, 80, 90]]}
        rows={[[[320, 268], [480, 305], [610, 308], [740, 300], [870, 262]], [[360, 315], [480, 320], [610, 320], [740, 318], [848, 300]]]} />
      <path d="M215 250Q260 240 300 262L262 285Q235 270 215 290z" fill="#1c78a8" stroke="#04060c" strokeWidth="2" />
      <path d="M955 250l38 6 -6 50 -22 4 2-30z" fill="#2c9ad8" stroke="#04060c" strokeWidth="2" />

      {/* upper ring, left */}
      <Patch nu={11} nv={7} top={[[90, 50, 10], [110, 62, 10], [120, 70, 8]]} bot={[[60, 45, 5], [110, 90, 8], [90, 100, 10]]}
        rows={[[[158, 165], [220, 132], [330, 112], [450, 101], [575, 97]], [[185, 190], [250, 150], [340, 150], [430, 142], [530, 125]], [[205, 225], [270, 195], [340, 190], [410, 180], [470, 165]], [[225, 250], [290, 245], [350, 240], [400, 218], [440, 190]]]} />
      <Patch nu={6} nv={2} top={[[175, 105, 10], [190, 120, 10]]} bot={[[190, 140, 14], [150, 120, 10]]}
        rows={[[[290, 150], [360, 146], [430, 140], [500, 130]], [[270, 200], [340, 190], [400, 182], [450, 170]]]} />
      <Patch nu={5} nv={1} top={[[70, 180, 20], [190, 190, 30], [150, 170, 30]]} rows={[[[165, 168], [185, 180], [215, 210], [245, 238]], [[150, 185], [175, 210], [205, 238], [225, 250]]]} />
      <path d="M155 166l22-14 8 8-20 8zM1070 180l20-3 10 6-20 5z" fill="#e01414" stroke="#04060c" strokeWidth="2" />

      {/* upper ring, right */}
      <Patch nu={6} nv={3} top={[[70, 80, 20], [170, 100, 20]]} bot={[[120, 120, 20], [200, 190, 30]]}
        rows={[[[600, 98], [660, 101], [725, 106]], [[640, 115], [690, 130], [740, 150]], [[690, 165], [715, 180], [750, 190]]]} />
      <Patch nu={13} nv={6} top={[[222, 190, 30], [225, 220, 35], [205, 195, 35], [120, 100, 20]]} bot={[[225, 225, 40], [242, 238, 40], [240, 235, 40], [225, 220, 30]]}
        rows={[[[715, 106], [800, 108], [920, 122], [1010, 138], [1075, 178]], [[735, 150], [820, 150], [920, 162], [1000, 178], [1045, 200]], [[745, 190], [820, 195], [910, 205], [990, 215], [1040, 232]], [[760, 215], [830, 232], [910, 238], [990, 250], [1058, 274]]]} />
      <Patch nu={4} nv={3} top={[[120, 80, 20]]} bot={[[70, 60, 10]]} rows={[[[1030, 155], [1055, 165], [1078, 182]], [[1035, 205], [1045, 212], [1060, 220]], [[1040, 235], [1055, 232], [1075, 215]]]} />
      <Patch nu={2} nv={4} top={[[20, 190, 30]]} bot={[[210, 210, 30]]} rows={[[[1075, 190], [1092, 185], [1108, 182]], [[1062, 215], [1085, 222], [1108, 225]], [[1045, 255], [1060, 268], [1072, 265]]]} />

      {/* centre fold */}
      <Patch nu={14} nv={6} top={[[0, 90, 60], [0, 80, 55], [10, 120, 80], [20, 170, 115], [24, 210, 150]]} bot={[[20, 130, 125], [40, 190, 160], [20, 165, 110], [30, 220, 160], [60, 230, 180]]}
        rows={[[[470, 190], [520, 145], [600, 130], [650, 145], [720, 200]], [[440, 215], [510, 200], [600, 180], [680, 200], [760, 225]], [[410, 235], [500, 240], [600, 245], [700, 240], [830, 236]], [[400, 245], [490, 285], [600, 303], [720, 290], [845, 245]]]} />
      <Patch nu={12} nv={1} top={[[70, 90, 0], [60, 110, 0], [20, 130, 10], [0, 190, 10], [60, 150, 10], [100, 130, 20], [120, 140, 20]]}
        rows={[[[380, 215], [440, 178], [500, 128], [580, 98], [640, 108], [690, 150], [745, 200], [820, 232]], [[380, 243], [450, 212], [515, 155], [580, 130], [630, 130], [680, 180], [735, 215], [820, 240]]]} />
      <Patch nu={20} nv={1} top={[[24, 90, 140], [24, 110, 130], [50, 190, 180], [20, 150, 110], [60, 220, 180], [28, 130, 160], [30, 110, 190]]}
        rows={[[[232, 250], [310, 243], [400, 245], [490, 285], [600, 303], [720, 285], [830, 242], [930, 240]], [[240, 275], [310, 265], [390, 280], [480, 308], [600, 318], [720, 308], [840, 272], [945, 250]]]} />
      <path d="M158 165Q230 120 330 112L450 101L575 96L720 104Q900 112 1010 137L1078 178" fill="none" stroke="#000" strokeWidth="4" />
    </svg>
  );
}

/* ---------- viewport ---------- */

const LEGEND = ["bg-[#ff0000]", "bg-[#ffb200]", "bg-[#ffff00]", "bg-[#b2ff00]", "bg-[#00f400]", "bg-[#00f5a8]", "bg-[#00ffff]", "bg-[#00b2ff]", "bg-[#0000f4]"];
const LEVELS = ["32.868 最大", "29.216", "25.564", "21.912", "18.26", "14.608", "10.956", "7.304", "3.652", "0 最小"];

function Viewport() {
  const seg = "h-full flex-1 border-[#111]";
  return (
    <main className="relative h-[549px] shrink-0 overflow-hidden bg-[linear-gradient(#698bde,#9cb2e8_35%,#c9d7f3_65%,#e9effa_88%,#fbfcff)] text-[#0a0a14]">
      <div className="pt-[19px] pl-5 text-[13px] leading-5">
        <p className="text-sm leading-5 font-bold">B: 显式动力学</p>
        <p>总变形 2</p>
        <p>类型: 总变形</p>
        <p>单位: mm</p>
        <p>时间: 5.0001e-003 s</p>
        <p>循环数: 35770</p>
        <p>2023/3/31 17:48</p>
      </div>
      <div className="flex gap-[10px] pt-[18px] pl-5">
        <div className="mt-[11px] flex h-[203px] w-[21px] flex-col divide-y divide-[#111] border border-[#111]">
          {LEGEND.map((c) => <div key={c} className={"flex-1 " + c} />)}
        </div>
        <div className="flex h-[222px] flex-col justify-between text-[13px] leading-[22px]">
          {LEVELS.map((l, i) => <span key={l} className={i === 0 || i === 9 ? "text-sm leading-[22px] font-bold" : ""}>{l}</span>)}
        </div>
      </div>

      <div className="absolute top-[215px] left-[530px] w-[350px]"><Model /></div>
      <p className="absolute top-[292px] left-[503px] text-[44px] leading-[64px] whitespace-nowrap text-[#e81c24]">小汪学知识</p>

      <div className="absolute top-[482px] left-[518px] w-[580px] text-xs leading-4">
        <div className="grid grid-cols-[40px_1fr_40px_1fr_90px]"><span className="text-center">0.00</span><span /><span className="text-center">40.00</span><span /><span className="pl-[8px]">80.00 (mm)</span></div>
        <div className="ml-5 flex h-3 w-[494px] border border-[#111] bg-white">
          <span className={seg + " bg-black"} /><span className={seg} /><span className={seg + " bg-black"} /><span className={seg} />
        </div>
        <div className="mt-[2px] ml-5 flex w-[494px]"><span className="w-1/2 text-center">20.00</span><span className="w-1/2 text-center">60.00</span></div>
      </div>

      <div className="absolute top-[15px] left-[1421px] flex items-end" aria-label="Ansys">
        <svg width="41" height="35" viewBox="0 0 41 35" className="mb-[14px]" aria-hidden="true"><path d="M15 0h10L11 35H0zM26 2L41 35H31L21 13z" fill="#fff" /></svg>
        <span className="text-[46px] leading-[62px] font-bold text-white">nsys</span>
      </div>

      <div className="absolute top-[338px] left-[1456px] flex w-[60px] flex-col text-sm leading-[18px] text-[#2424c8]">
        <span className="pl-[9px]">Z</span>
        <svg width="60" height="90" viewBox="0 0 60 90" className="mt-2" aria-hidden="true">
          <path d="M10 0l8 20H2z" fill="#0a0ab8" /><path d="M8 20h5v28H8zM7 46h5v36H7z" fill="#0808c0" /><path d="M8 82l12-4 40 2v5l-46 0z" fill="#7a1010" /><path d="M12 85l30 5 18 0-30-6z" fill="#107010" />
        </svg>
      </div>
    </main>
  );
}

/* ---------- graph panel ---------- */

const GREEN = [895, 892, 890, 888, 884, 882, 880, 879, 877, 875, 874, 873, 871, 869, 868, 867, 864, 863, 862, 859, 858];
const BLUE = [894, 893, 893, 893, 893, 893, 892, 892, 891, 891, 889, 889, 889, 888, 888, 887, 885, 884, 883, 883, 882];

function Series({ ys, color }: { ys: number[]; color: string }) {
  const pts = ys.map((y, i) => [104 + 32.55 * i, y - 828] as P);
  return (
    <g>
      <polyline points={pts.map((p) => p.join(",")).join(" ")} fill="none" stroke={color} strokeWidth="1.300" />
      {pts.map((p, i) => <rect key={i} x={p[0] - 2} y={p[1] - 2} width="4" height="4" fill={color} />)}
    </g>
  );
}

function GraphPanel() {
  const xs = [104, 234, 364, 493, 624, 755];
  return (
    <section className="flex w-[784px] shrink-0 flex-col border-r border-[#d3d3d8] bg-[#eeeef0]">
      <div className="flex h-[27px] shrink-0 items-center gap-[6px] border-t border-[#d3d3d8] pr-[5px] pb-px pl-[6px] text-[#222]">
        <h2 className="text-[15px] leading-5 font-normal text-[#555]">图形</h2>
        <Dots />
        <PanelButtons />
      </div>
      <div className="flex h-[35px] shrink-0 items-center pb-px pl-[12px] text-[15px] text-[#222]">
        <Grip />
        <span className="ml-[13px]">动画</span>
        <TB label="开头" className="ml-[6px] w-7"><Ic><path d="M1 1h3v16H1z" fill="#999" /><path d="M17 1v16L6 9z" fill="#c4c4c4" /></Ic></TB>
        <TB label="播放" className="w-[26px]"><Ic w={14} h={16} vb="0 0 14 16"><path d="M0 0l14 8-14 8z" fill="#c9980c" /></Ic></TB>
        <TB boxed label="停止" className="w-7"><Ic w={16} h={16} vb="0 0 16 16"><path d="M1 1h14v14H1z" fill="#c99b12" stroke="#5a4a18" strokeWidth="1.500" /></Ic></TB>
        <TB label="结尾" className="w-7"><Ic><path d="M14 1h3v16h-3z" fill="#999" /><path d="M1 1v16l11-8z" fill="#c4c4c4" /></Ic></TB>
        <VSep className="mr-1 ml-px h-6" />
        <TB boxed label="分布" className="w-7"><Ic><path d="M1 1h16v12H1zM6 1v12M12 1v12" stroke="#1ac01a" strokeWidth="1.500" /><path d="M1 17l2-3 2 3zM7 17l2-3 2 3zM13 17l2-3 2 3z" fill="#c01818" /></Ic></TB>
        <TB label="结果集" className="w-7"><Ic><path d="M1 1h16v12H1zM6 1v12M12 1v12" stroke="#1878c8" strokeWidth="1.500" /><path d="M1 17l2-3 2 3zM7 17l2-3 2 3zM13 17l2-3 2 3z" fill="#c01818" /></Ic></TB>
        <VSep className="mx-[3px] h-6" />
        <Drop className="h-[27px] w-[126px]" label="帧数" value="20 帧" />
        <Drop className="h-[27px] w-[124px] border-l-0" label="时长" value="2 Sec (自动)" />
        <VSep className="ml-[6px] h-6" />
        <TB label="导出视频"><Ic><path d="M1 1h16v13H1z" fill="#eee" stroke="#444" /><path d="M1 3h16" stroke="#444" strokeWidth="3" strokeDasharray="2 1" /><path d="M4 11q4-6 8-2" stroke="#e01010" strokeWidth="1.500" /><path d="M9 9h8v8H9z" fill="#5aa0e0" stroke="#1868b0" /><path d="M11 13h4v4h-4z" fill="#fff" /></Ic></TB>
        <VSep className="mx-[2px] h-6" />
        <TB label="缩放动画" className="w-8"><Mag color="#b0b0b0"><path d="M7 5l5 3.500L7 12z" fill="#aaa" /></Mag></TB>
        <TB label="色条"><Ic><path d="M1 3h16" stroke="#e01010" strokeWidth="5" strokeDasharray="3 1" /><path d="M1 9h16" stroke="#10d010" strokeWidth="5" strokeDasharray="3 1" /><path d="M1 15h16" stroke="#1010d8" strokeWidth="5" strokeDasharray="3 1" /></Ic></TB>
        <TB label="摄像" className="w-7"><Ic><path d="M1 4l4-2 13 5-2 4-3 0-6-2z" fill="#a8a8a8" /><path d="M3 7l9 4-3 3-7-3z" fill="#bbb" /><path d="M3 16l5-3" stroke="#aaa" strokeWidth="2" /></Ic></TB>
        <VSep className="ml-0.5 h-6" />
        <TB label="胶片一" className="ml-[3px] w-7"><Ic><path d="M0 1h18v15H0z" fill="#a2a2a2" /><path d="M1 3h16M1 14h16" stroke="#eee" strokeWidth="2" strokeDasharray="2 1" /><path d="M3 7h12v4H3z" fill="#ccc" /></Ic></TB>
        <TB label="胶片二" className="w-7"><Ic><path d="M0 1h18v15H0z" fill="#a2a2a2" /><path d="M1 3h16M1 14h16" stroke="#eee" strokeWidth="2" strokeDasharray="2 1" /><path d="M3 7h12v4H3z" fill="#ccc" /><circle cx="14" cy="15" r="3" fill="#999" /></Ic></TB>
        <VSep className="ml-[2px] h-6" />
        <TB label="频谱" className="ml-1 w-7"><Ic w={19} h={18} vb="0 0 19 18"><path d="M2 0v18M0 9h19M5 3v9M8 5v8M11 6v5M14 8v3" stroke="#b0b0b0" strokeWidth="1.500" /></Ic></TB>
        <button type="button" aria-label="更多" className="mr-[5px] ml-auto flex flex-col items-center gap-1 self-center"><Ic w={9} h={10} vb="0 0 9 10"><path d="M1 1l3.500 3L8 1M1 6l3.500 3L8 6" stroke="#555" /></Ic><Caret className="text-[#222]" /></button>
      </div>
      <div className="min-h-0 flex-1 bg-white">
        <svg width="783" height="165" viewBox="1 0 783 165" className="block [font-family:'Noto_Sans',sans-serif]" fontSize="11" fill="#333" role="img" aria-label="最小、最大、平均随时间变化">
          <path d="M96 30h659M104 30v45" stroke="#b5b5b5" fill="none" />
          {xs.map((x) => <path key={x} d={`M${x} 66v10`} stroke="#b9a0a0" />)}
          <path d="M754 22h3v44h-3z" fill="#000" />
          <Series ys={GREEN.map(() => 895)} color="#b00c0c" />
          <Series ys={GREEN} color="#147a14" />
          <Series ys={BLUE} color="#1212a8" />
          <text x="755" y="17" textAnchor="end" fontWeight="700" fill="#111">5.0001e-3</text>
          <text x="90" y="36" textAnchor="end">32.868</text>
          <text x="90" y="72" textAnchor="end">0.</text>
          <text x="104" y="90" textAnchor="middle">0.</text>
          <text x="233" y="90">1.e-3</text>
          <text x="362" y="90">2.e-3</text>
          <text x="493" y="90">3.e-3</text>
          <text x="623" y="90">4.e-3</text>
          <text x="755" y="90" textAnchor="end">5.0001e-3</text>
          <text x="431" y="121" textAnchor="middle" fontSize="14" fontWeight="700" fill="#000">[s]</text>
          <text x="-44" y="44" transform="rotate(-90)" textAnchor="middle" fontSize="17" fontWeight="700" fill="#000">[mm]</text>
          <path d="M104.500 133.500h651v17h-651z" fill="#ededed" stroke="#a0a0a0" />
          <text x="429" y="146" textAnchor="middle">1</text>
        </svg>
      </div>
    </section>
  );
}

/* ---------- tabular data ---------- */

const DATA = [
  ["1.1755e-038", "0.", "0.", "0."],
  ["2.5001e-004", "0.", "2.2105", "0.79144"],
  ["5.0006e-004", "0.", "3.5175", "0.9813"],
  ["7.5012e-004", "0.", "5.969", "1.0658"],
  ["1.e-003", "0.", "8.7741", "1.2661"],
  ["1.25e-003", "0.", "10.981", "1.6508"],
  ["1.5001e-003", "0.", "12.553", "2.1574"],
  ["1.75e-003", "0.", "13.896", "2.6994"],
];

function TablePanel() {
  const th = "border-r border-b border-[#777] bg-[#efefef] p-0 text-left font-normal ";
  const heads = [
    { id: "c-min", t: "最小 [mm]", c: "text-[#d01818]" },
    { id: "c-max", t: "最大 [mm]", c: "text-[#109018]" },
    { id: "c-avg", t: "平均 [mm]", c: "text-[#1414c8]" },
  ];
  return (
    <section className="ml-[5px] flex min-w-0 flex-1 flex-col overflow-hidden border-l border-[#d3d3d8] bg-[#eeeef0]">
      <div className="flex h-[27px] shrink-0 items-center gap-[6px] border-t border-[#d3d3d8] pb-px pl-1">
        <h2 className="text-[15px] leading-5 font-normal text-[#555]">表格数据</h2>
        <Dots />
      </div>
      <div className="min-h-0 flex-1 bg-[#9e9e9e]">
        <table className="w-[416px] table-fixed border-collapse text-[13px] leading-5 text-[#111]">
          <colgroup><col className="w-[24px]" /><col className="w-[89px]" /><col className="w-[101px]" /><col className="w-[101px]" /><col className="w-[101px]" /></colgroup>
          <thead>
            <tr className="h-[23px]">
              <th className={th} />
              <th className={th + "pl-1"}>时间 [s]</th>
              {heads.map((h) => (
                <th key={h.id} className={th}>
                  <label htmlFor={h.id} className={"flex items-center justify-between pr-[6px] pl-[4px] whitespace-nowrap " + h.c}><Tick id={h.id} checked className="size-4" />{h.t}</label>
                </th>
              ))}
            </tr>
          </thead>
          <tbody>
            {DATA.map((r, i) => (
              <tr key={i} className={i % 2 ? "h-[23px]" : "h-[22px]"}>
                <th className={th + "pl-[3px]"}>{i + 1}</th>
                {r.map((c, k) => <td key={k} className="border-r border-b border-[#c3c3c0] bg-[#e6e5e1] p-0 pl-[3px]">{c}</td>)}
              </tr>
            ))}
          </tbody>
        </table>
      </div>
    </section>
  );
}

/* ---------- status bar, input method bar and taskbar ---------- */

function Sogou({ size }: { size: number }) {
  return (
    <svg width={size} height={size} viewBox="0 0 40 40" className="shrink-0" aria-hidden="true">
      <rect x="4" y="4" width="32" height="32" rx="5" fill="#e8562a" transform="rotate(-10 20 20)" />
      <path d="M29 11q-9-3-14 0t0 7l8 3q5 4-1 7t-12 0" fill="none" stroke="#fff" strokeWidth="5" strokeLinecap="round" />
    </svg>
  );
}

function StatusBar() {
  return (
    <footer className="relative flex h-[26px] shrink-0 items-center bg-[#0078c8] pt-0.5 pl-[1187px] text-[15px] whitespace-nowrap text-white">
      <div className="flex items-center gap-[3px]"><Ic w={20} h={22} vb="0 0 20 22"><path d="M1 8h18v9h-9l-4 5v-5H1z" fill="#f0d060" /><circle cx="11" cy="7" r="7" fill="#1520a8" /><path d="M11 3v2M11 6v5" stroke="#fff" strokeWidth="2" /></Ic>2 消息</div>
      <span className="ml-[24px]">无选择</span>
      <button type="button" className="ml-[26px] flex items-center gap-2"><Ic w={10} h={7} vb="0 0 10 7"><path d="M5 0l5 7H0z" fill="#fff" /></Ic>度量标准（mm、kg、N、s、mV、mA）</button>
      <div className="absolute right-0 bottom-0 flex h-[31px] w-[98px] items-center gap-[13px] rounded-l-full bg-white pl-[16px] text-[#1470c8]">
        <span className="absolute -top-[7px] -left-[32px]"><Sogou size={42} /></span>
        <span className="text-[18px] leading-5 font-bold">中</span>
        <Ic w={16} h={18} vb="0 0 16 18"><circle cx="3" cy="5" r="2.200" stroke="#1470c8" strokeWidth="1.600" /><path d="M10 9h5q1 5-4 7 2-2 1-3h-2z" fill="#1470c8" /></Ic>
        <Ic w={16} h={22} vb="0 0 16 22"><rect x="4" y="1" width="8" height="13" rx="4" fill="#1470c8" /><path d="M1 9q0 8 7 8t7-8M8 17v4" stroke="#1470c8" strokeWidth="2" /></Ic>
      </div>
    </footer>
  );
}

function TaskIcon({ label, mark, children }: { label: string; mark?: "run" | "active"; children: React.ReactNode }) {
  return (
    <button type="button" aria-label={label} className={"relative flex h-12 w-[50px] shrink-0 items-center justify-center rounded-md pb-px " + (mark === "active" ? "bg-white/60" : "")}>
      {children}
      {mark === "run" && <span className="absolute -bottom-px left-[21px] h-1 w-2 rounded-full bg-[#7d8a88]" />}
      {mark === "active" && <span className="absolute bottom-0 left-[15px] h-1 w-5 rounded-full bg-[#0f6cbd]" />}
    </button>
  );
}

function AppTile({ text, children }: { text: string; children: React.ReactNode }) {
  return (
    <svg width="31" height="31" viewBox="0 0 31 31" aria-hidden="true">
      <path d="M0 0h31v31H0z" fill="#000" />
      <g fill="none" stroke="#f0a818" strokeWidth="1.800">{children}</g>
      <text x="15.500" y="30" textAnchor="middle" fontSize="11" fontWeight="700" fill="#fff" fontFamily="Liberation Sans, sans-serif">{text}</text>
    </svg>
  );
}

function Taskbar() {
  return (
    <nav className="flex h-[61px] shrink-0 items-center overflow-hidden border-t border-[#9cc9e0] bg-[linear-gradient(90deg,#cdf7e2_0%,#d3f5dc_30%,#d8dfd8_37%,#c8efe0_47%,#cfe2ea_58%,#cbeedd_68%,#cfe6ea_78%,#e0dcda_88%,#f0dcc4_95%,#ecd9cc_100%)]">
      <div className="flex items-center pl-[525px]">
        <TaskIcon label="开始"><Ic w={30} h={30} vb="0 0 30 30"><path d="M0 0h14v14H0z" fill="#35bdf0" /><path d="M16 0h14v14H16z" fill="#1f9ce6" /><path d="M0 16h14v14H0z" fill="#1f9ce6" /><path d="M16 16h14v14H16z" fill="#0f7cd4" /></Ic></TaskIcon>
        <button type="button" className="mr-2 ml-2 flex h-[38px] w-[123px] items-center justify-center gap-[5px] rounded-full bg-white/75 pl-1 text-[15px] text-[#111]">
          <Ic w={18} h={18} vb="0 0 18 18"><circle cx="11" cy="7" r="6" stroke="#111" strokeWidth="1.600" /><path d="M7 11l-6 6" stroke="#111" strokeWidth="1.800" /></Ic>搜索
        </button>
      </div>
      <div className="flex items-center gap-[5px]">
        <TaskIcon label="任务视图"><Ic w={30} h={30} vb="0 0 30 30"><path d="M0 9h23v20H0z" fill="#2b2b2b" /><path d="M8 1h21v20H8z" fill="#f4f6f6" fillOpacity=".75" /><path d="M8 9h15v12H8z" fill="#a4a8a8" /></Ic></TaskIcon>
        <TaskIcon label="资源管理器"><Ic w={30} h={30} vb="0 0 30 30"><path d="M0 2h11l3 4h16v21H0z" fill="#d99a1c" /><path d="M0 7h30v21H0z" fill="#fbcd4a" /><path d="M5 20h20v8H5z" fill="#1f78c8" /><path d="M9 24h12v4H9z" fill="#155a9a" /></Ic></TaskIcon>
        <TaskIcon label="Edge" mark="run">
          <Ic w={31} h={31} vb="0 0 31 31">
            <circle cx="15.500" cy="15.500" r="15" fill="#1a7fd0" />
            <path d="M1 13Q4 0 16 0q13 1 15 13 0 9-9 8-5-1-2-5 0-6-7-7-9-1-12 4z" fill="#38c878" />
            <path d="M1 13Q4 1 15 1q10 0 12 7-14-6-26 5z" fill="#28b4d8" />
            <path d="M13 10q-8 4-4 13t14 5q-8-1-11-7-2-6 1-11z" fill="#0d4f96" />
            <path d="M19 14q-3 4 1 7t10-1q-3 7-10 6-8-2-8-9 1-5 7-3z" fill="#d8eef0" />
          </Ic>
        </TaskIcon>
        <TaskIcon label="百度"><Ic w={30} h={30} vb="0 0 30 30"><path d="M0 0h30v30H0z" fill="#f4f8fc" /><g fill="#2a62d0"><ellipse cx="6" cy="11" rx="2.500" ry="3.500" /><ellipse cx="11.500" cy="5.500" rx="2.500" ry="3.500" /><ellipse cx="18.500" cy="5.500" rx="2.500" ry="3.500" /><ellipse cx="24" cy="11" rx="2.500" ry="3.500" /><path d="M15 11q4 0 6 5 4 3 3 7t-9 3-9-3 3-7q2-5 6-5z" /></g><text x="15" y="24" textAnchor="middle" fontSize="10" fontWeight="700" fill="#fff" fontFamily="Liberation Sans, sans-serif">du</text><path d="M9 28h7v2H9z" fill="#d02020" /><path d="M16 28h6v2h-6z" fill="#2a62d0" /></Ic></TaskIcon>
        <TaskIcon label="hao123"><Ic w={30} h={30} vb="0 0 30 30"><path d="M0 0h30v30H0z" fill="#fdfdfb" /><text x="15" y="15" textAnchor="middle" fontSize="12" fontWeight="700" fill="#28a050" fontFamily="Liberation Sans, sans-serif">hǎo</text><text x="15" y="25" textAnchor="middle" fontSize="10" fontWeight="700" fill="#f07828" fontFamily="Liberation Sans, sans-serif">123</text></Ic></TaskIcon>
        <TaskIcon label="SolidWorks 2021" mark="run"><Ic w={30} h={31} vb="0 0 30 31"><path d="M1 6L13 0l16 5v20l-10 6L3 27z" fill="#c4141c" /><path d="M1 6L13 0l16 5-9 4z" fill="#e84048" /><path d="M20 9l9-4v20l-9 6z" fill="#8a0c14" /><text x="15" y="21" textAnchor="middle" fontSize="14" fontWeight="700" fill="#fff" fontFamily="Liberation Sans, sans-serif">SW</text><path d="M12 23h18v8H12z" fill="#222" /><text x="21" y="30" textAnchor="middle" fontSize="8" fontWeight="700" fill="#fff" fontFamily="Liberation Sans, sans-serif">2021</text></Ic></TaskIcon>
        <TaskIcon label="Workbench" mark="run"><AppTile text="WB"><path d="M15.500 1l4 2.500v4l-4 2.500-4-2.500v-4zM11 10l4 2.500v4L11 19l-4-2.500v-4zM20 10l4 2.500v4L20 19l-4-2.500v-4z" /></AppTile></TaskIcon>
        <TaskIcon label="SpaceClaim" mark="run"><AppTile text="SC"><path d="M8 2l16 8-16 9zM12 7l7 3.500-7 4z" /></AppTile></TaskIcon>
        <TaskIcon label="Mechanical" mark="active"><AppTile text="M"><circle cx="12" cy="13" r="4.500" /><circle cx="12" cy="13" r="6.500" strokeDasharray="2 2" /><circle cx="21" cy="6" r="3" /><circle cx="21" cy="6" r="4.800" strokeDasharray="2 2" /></AppTile></TaskIcon>
      </div>
      <div className="ml-auto flex shrink-0 items-center text-[#1a1a1a]">
        <Ic w={18} h={10} vb="0 0 18 10"><path d="M1 9l8-8 8 8" stroke="#222" strokeWidth="1.500" /></Ic>
        <span className="ml-[9px]"><Ic w={20} h={20} vb="0 0 20 20"><g stroke="#e0888c" strokeWidth="1.800"><path d="M10 7q-3-6 2-6M13 9q4-6 6-1M13 11q6 1 3 5M11 13q1 6-4 6M8 12q-5 5-7 0M7 9Q1 6 5 3" /><circle cx="10" cy="10" r="5" /></g><circle cx="10" cy="10" r="2" fill="#7a9ad0" /></Ic></span>
        <span className="ml-[10px]"><Ic w={20} h={20} vb="0 0 20 20"><circle cx="10" cy="10" r="9.500" fill="#f2dc28" /><path d="M1 7Q5-1 13 1q4 1 6 5-9-4-18 1zM19 13q-4 8-12 6-4-1-6-5 9 4 18-1z" fill="#1f9a3c" /><path d="M10 7v6M7 10h6" stroke="#1f9a3c" strokeWidth="2" /></Ic></span>
        <span className="ml-[10px]"><Ic w={20} h={20} vb="0 0 20 20"><path d="M1 8a9 9 0 0 1 17-2M18 1v5h-5M1 12a9 9 0 0 0 8 7M1 19v-6h5" stroke="#222" strokeWidth="1.400" /><circle cx="15" cy="15" r="5" fill="#f59a18" /></Ic></span>
        <span className="ml-[18px]"><Ic w={14} h={20} vb="0 0 14 20"><rect x="4" y="1" width="6" height="12" rx="3" stroke="#1d4f8c" strokeWidth="1.500" /><path d="M1 8q0 8 6 8t6-8M7 16v4" stroke="#1d4f8c" strokeWidth="1.500" /></Ic></span>
        <span className="ml-[24px] text-[18px] leading-5 text-[#444]">中</span>
        <span className="ml-[28px]"><Sogou size={22} /></span>
        <span className="ml-[27px]"><Ic w={18} h={15} vb="0 0 18 15"><path d="M1 6q8-8 16 0M4 9q5-5 10 0M6.500 12q2.500-3 5 0" stroke="#222" strokeWidth="1.500" /><circle cx="9" cy="13" r="1.500" fill="#222" /></Ic></span>
        <span className="ml-[11px]"><Ic w={20} h={16} vb="0 0 20 16"><path d="M1 5h4l5-4v14l-5-4H1zM12 5q2 3 0 6M15 3q4 5 0 10" stroke="#222" strokeWidth="1.300" /></Ic></span>
        <span className="ml-[11px]"><Ic w={21} h={17} vb="0 0 21 17"><rect x="6" y="4" width="13" height="11" rx="2" stroke="#1a1a1a" strokeWidth="1.500" /><path d="M8 6h7v7H8zM19 7h2v5h-2z" fill="#1a1a1a" /><path d="M2 0v3M6 0v3M0 4h8M1 5h6M4 6v6h3" stroke="#1a1a1a" strokeWidth="1.800" /></Ic></span>
        <span className="mt-5 ml-[19px] w-[29px] overflow-hidden text-sm leading-5 whitespace-nowrap">2023/3/31</span>
      </div>
    </nav>
  );
}

export default function App() {
  return (
    <div className="flex h-screen w-full flex-col overflow-hidden bg-[#eeeef0] [font-family:'Noto_Sans','Noto_Sans_CJK_SC',sans-serif]">
      <TitleBar />
      <Ribbon />
      <div className="flex min-h-0 flex-1">
        <LeftColumn />
        <div className="ml-[6px] flex min-w-0 flex-1 flex-col">
          <ViewToolbar />
          <Viewport />
          <div className="mt-1 flex min-h-0 flex-1">
            <GraphPanel />
            <TablePanel />
          </div>
        </div>
      </div>
      <StatusBar />
      <Taskbar />
    </div>
  );
}
